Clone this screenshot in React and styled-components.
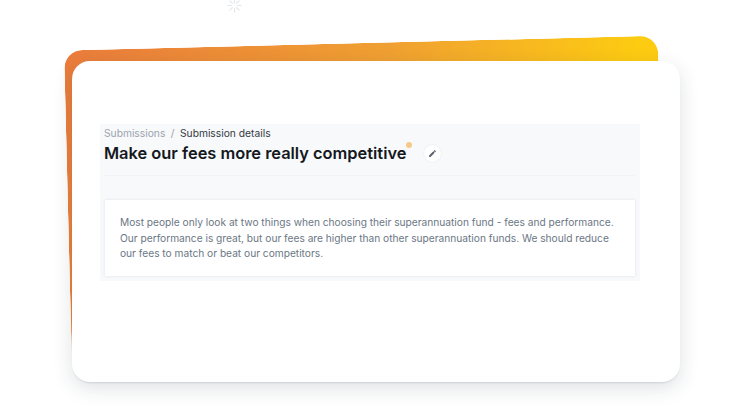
import React from 'react';
import styled, { createGlobalStyle } from 'styled-components';

const GlobalStyle = createGlobalStyle`
  html, body {
    margin: 0;
    background: #fff;
    font-family: Inter, "Liberation Sans", sans-serif;
  }
`;

const Stage = styled.div`
  position: relative;
  width: 740px;
  height: 416px;
  overflow: hidden;
  padding: 61px 60px 34px 72px;
  box-sizing: border-box;
  background: #fff;
`;

const Spinner = styled.svg`
  position: absolute;
  left: 227px;
  top: -2px;
  width: 15px;
  height: 15px;
  stroke: #e4e7ea;
  stroke-width: 1.2;
  stroke-linecap: round;
  fill: none;
`;

// the tilted gradient sheet peeking out from behind the card
const BackSheet = styled.div`
  position: absolute;
  left: 68px;
  top: 43px;
  width: 594px;
  height: 328px;
  border-radius: 18px;
  background: linear-gradient(100deg, #ea7c3c 0%, #f0a032 50%, #fdcb12 88%);
  transform: rotate(-1.43deg);
  mask-image: linear-gradient(to bottom, #000 82%, transparent 96%);
`;

const Card = styled.div`
  position: relative;
  height: 100%;
  box-sizing: border-box;
  padding: 63px 40px 0 28px;
  background: #fff;
  border-radius: 18px;
  box-shadow: 0 6px 20px rgba(30, 40, 60, 0.14), 0 2px 2px -1px rgba(30, 40, 60, 0.14);
`;

const Panel = styled.section`
  background: #f8f9fb;
  height: 157px;
  box-sizing: border-box;
  padding: 3px 5px 5px;
  display: flex;
  flex-direction: column;
`;

const Header = styled.header`
  margin-left: -1px;
  padding: 0 0 10px;
  border-bottom: 1px solid #f0f2f5;
`;

const Crumbs = styled.nav`
  display: flex;
  gap: 5.5px;
  font-size: 10.25px;
  line-height: 13px;
`;

const Crumb = styled.span`
  color: ${(props) => (props.$current ? '#32383f' : '#9aa3ad')};
`;

const TitleRow = styled.div`
  display: flex;
  align-items: center;
  margin-top: 2px;
`;

const Title = styled.h1`
  position: relative;
  margin: 0;
  font-size: 16.4px;
  line-height: 23px;
  font-weight: 600;
  color: #14181d;
`;

const Dot = styled.span`
  position: absolute;
  right: -6px;
  top: 0;
  width: 6px;
  height: 6px;
  border-radius: 50%;
  background: #f6c98a;
`;

const EditButton = styled.button`
  width: 17px;
  height: 17px;
  margin-left: 18px;
  padding: 0;
  display: flex;
  align-items: center;
  justify-content: center;
  border: 0;
  border-radius: 50%;
  background: #fff;
  box-shadow: 0 0 2px rgba(30, 40, 60, 0.1);
`;

const Body = styled.div`
  margin-top: 24px;
  padding: 15px 17px 0 15px;
  height: 76px;
  box-sizing: border-box;
  background: #fff;
  box-shadow: 0 0 3px rgba(30, 40, 60, 0.1);
  font-size: 10.18px;
  line-height: 15.5px;
  color: #6b7785;
`;

const spokes = [
  [7.5, 1, 7.5, 4.5],
  [7.5, 10.5, 7.5, 14],
  [2.9, 2.9, 5.4, 5.4],
  [9.6, 9.6, 12.1, 12.1],
  [1, 7.5, 4.5, 7.5],
  [10.5, 7.5, 14, 7.5],
  [2.9, 12.1, 5.4, 9.6],
  [9.6, 5.4, 12.1, 2.9],
];

const App = () => (
  <Stage>
    <GlobalStyle />
    <Spinner viewBox="0 0 15 15">
      {spokes.map(([x1, y1, x2, y2]) => (
        <line key={`${x1}-${y1}`} x1={x1} y1={y1} x2={x2} y2={y2} />
      ))}
    </Spinner>
    <BackSheet />
    <Card>
      <Panel>
        <Header>
          <Crumbs>
            <Crumb>Submissions</Crumb>
            <Crumb>/</Crumb>
            <Crumb $current>Submission details</Crumb>
          </Crumbs>
          <TitleRow>
            <Title>
              Make our fees more really competitive
              <Dot />
            </Title>
            <EditButton aria-label="Edit">
              <svg width="9" height="9" viewBox="0 0 24 24" fill="#5a6470">
                <path d="M3 17.25V21h3.75L17.81 9.94l-3.75-3.75L3 17.25zM20.71 7.04a1 1 0 0 0 0-1.41l-2.34-2.34a1 1 0 0 0-1.41 0l-1.83 1.83 3.75 3.75 1.83-1.83z" />
              </svg>
            </EditButton>
          </TitleRow>
        </Header>
        <Body>
          Most people only look at two things when choosing their superannuation fund - fees and performance.
          Our performance is great, but our fees are higher than other superannuation funds. We should reduce
          our fees to match or beat our competitors.
        </Body>
      </Panel>
    </Card>
  </Stage>
);

export default App;
